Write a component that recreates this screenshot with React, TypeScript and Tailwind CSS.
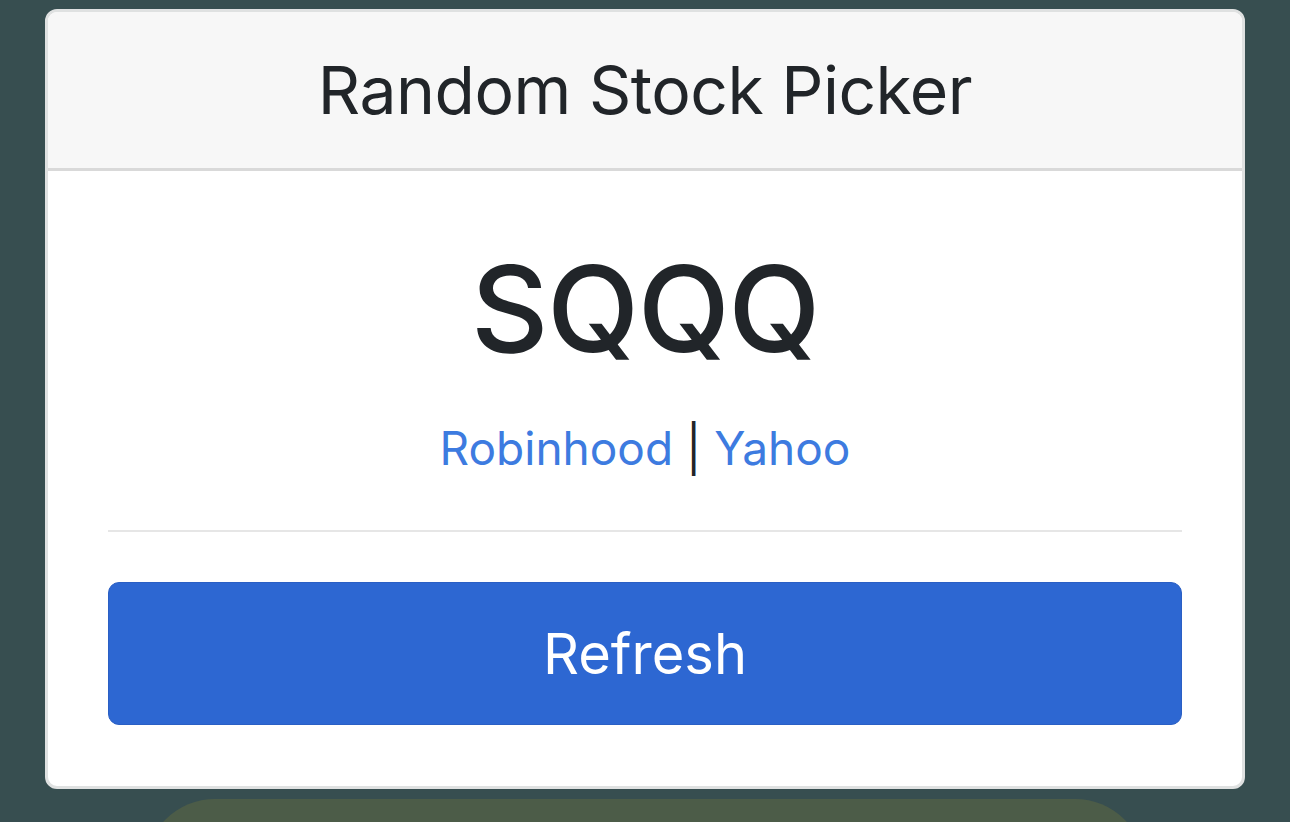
import React from 'react';

export default function App() {
  return (
    <div
      className="relative h-[822px] w-[1290px] overflow-hidden bg-[#374e50]"
      style={{ fontFamily: 'Inter, "Noto Sans", sans-serif' }}
    >
      <div className="flex flex-col items-center pt-[9px]">
        <div className="w-[1200px] overflow-hidden rounded-[12px] border-[3px] border-[#dfe1e1] bg-white">
          <div className="flex h-[159px] items-center justify-center border-b-[3px] border-[#d9d9d9] bg-[#f7f7f7]">
            <h1 className="text-[66px] leading-none tracking-[-0.5px] text-[#212529]">Random Stock Picker</h1>
          </div>
          <div className="flex flex-col items-center px-[60px] pb-[61px] pt-[66px]">
            <div className="text-[120px] font-medium leading-[144px] tracking-[-1.5px] text-[#212529]">SQQQ</div>
            <div className="mt-[37px] text-[46px] leading-[60px] text-[#212529]">
              <a href="#" className="text-[#3d7be0]">Robinhood</a> | <a href="#" className="text-[#3d7be0]">Yahoo</a>
            </div>
            <hr className="mt-[52px] w-full border-t-[2px] border-[#e6e6e6]" />
            <button className="mt-[50px] flex h-[143px] w-full items-center justify-center rounded-[11px] border border-[#2a5fc4] bg-[#2d67d2] text-[56px] text-white">
              Refresh
            </button>
          </div>
        </div>
        <div className="mt-[10px] h-[200px] w-[1000px] rounded-[70px] bg-[#4c5c48]" />
      </div>
    </div>
  );
}
